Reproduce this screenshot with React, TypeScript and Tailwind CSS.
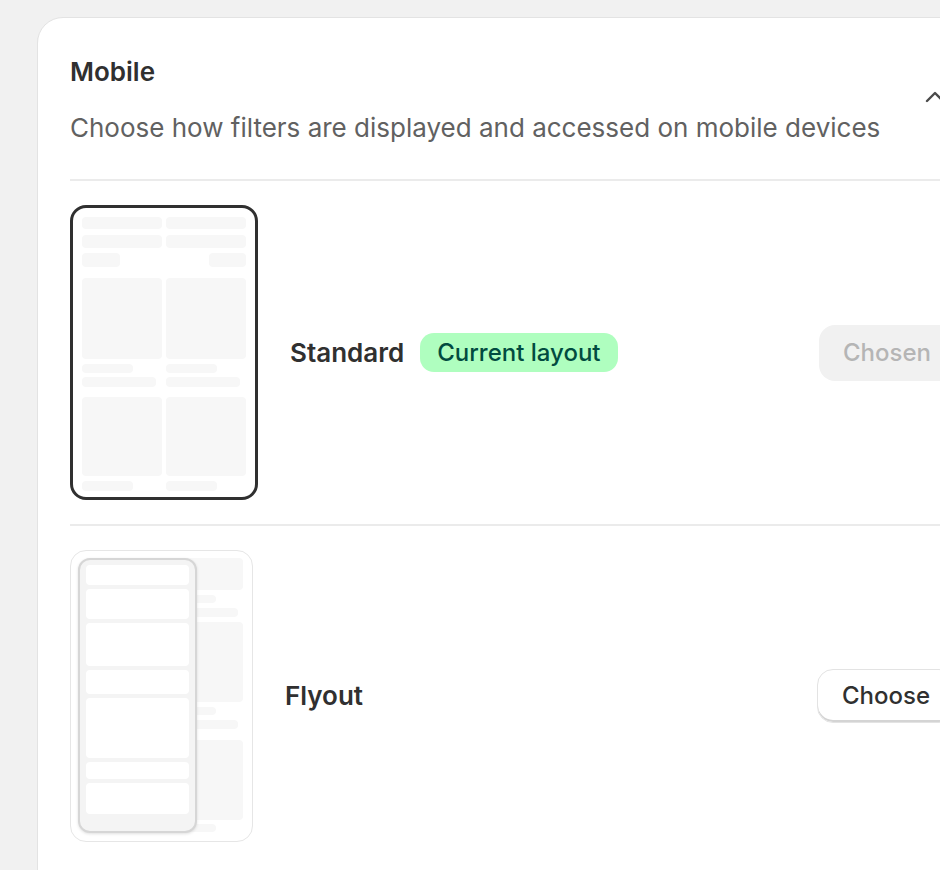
const Bar = ({ className }: { className: string }) => (
  <div className={`rounded-[4px] bg-[#f7f7f7] ${className}`} />
);

const StandardThumb = () => (
  <div className="h-[295px] w-[188px] shrink-0 overflow-hidden rounded-[16px] border-[3px] border-[#303030] bg-white p-[9px]">
    <div className="grid grid-cols-2 gap-x-1 gap-y-[6px]">
      <Bar className="h-3" />
      <Bar className="h-3" />
      <Bar className="h-[13px]" />
      <Bar className="h-[13px]" />
    </div>
    <div className="mt-[5px] flex justify-between">
      <Bar className="h-[14px] w-[38px]" />
      <Bar className="h-[14px] w-[37px]" />
    </div>
    <div className="mt-[11px] grid grid-cols-2 gap-x-1">
      {[0, 1].map((i) => (
        <div key={i} className="flex flex-col">
          <Bar className="h-[81px]" />
          <Bar className="mt-[5px] h-[9px] w-[51px]" />
          <Bar className="mt-[4px] h-[10px] w-[74px]" />
          <Bar className="mt-[10px] h-[79px]" />
          <Bar className="mt-[5px] h-[10px] w-[51px]" />
        </div>
      ))}
    </div>
  </div>
);

const flyoutCells = ["h-[20px]", "h-[30px]", "h-[43px]", "h-[24px]", "h-[60px]", "h-[17px]", "h-[31px]"];

const FlyoutThumb = () => (
  <div className="relative h-[292px] w-[183px] shrink-0 overflow-hidden rounded-[16px] border border-[#e6e6e6] bg-white pl-[14px] pr-[9px] pt-[7px]">
    {/* page behind the flyout */}
    <div className="grid grid-cols-2 gap-x-1">
      {[0, 1].map((i) => (
        <div key={i} className="flex flex-col">
          <Bar className="h-[32px]" />
          <Bar className="mt-[5px] h-[8px] w-[50px]" />
          <Bar className="mt-[5px] h-[9px] w-[72px]" />
          <Bar className="mt-[5px] h-[80px]" />
          <Bar className="mt-[5px] h-[8px] w-[50px]" />
          <Bar className="mt-[5px] h-[9px] w-[72px]" />
          <Bar className="mt-[11px] h-[80px]" />
          <Bar className="mt-[4px] h-[8px] w-[50px]" />
        </div>
      ))}
    </div>

    {/* flyout panel */}
    <div className="absolute left-[7px] top-[7px] flex h-[275px] w-[119px] flex-col gap-1 rounded-[12px] border-2 border-[#d6d6d6] bg-[#f4f4f4] px-[6px] pt-[5px] shadow-[0_1px_3px_rgba(0,0,0,0.12)]">
      {flyoutCells.map((h, i) => (
        <div key={i} className={`rounded-[4px] bg-white ${h}`} />
      ))}
    </div>
  </div>
);

export default function App() {
  return (
    <div className="h-[870px] overflow-hidden bg-[#f1f1f1] pl-[37px] pt-[17px] font-['Inter',sans-serif] text-[#303030]">
      <div className="w-[951px] rounded-[26px] border border-[#e3e3e3] bg-white px-8 pb-12 pt-[38px] shadow-[0_1px_0_rgba(0,0,0,0.05)]">
        {/* Header */}
        <div className="flex items-center justify-between">
          <div className="flex flex-col gap-6">
            <h3 className="text-[26px] font-semibold leading-8">Mobile</h3>
            <p className="text-[26px] leading-8 text-[#616161]">
              Choose how filters are displayed and accessed on mobile devices
            </p>
          </div>
          <svg
            width="20"
            height="12"
            viewBox="0 0 20 12"
            fill="none"
            stroke="#4a4a4a"
            strokeWidth="2.4"
            strokeLinecap="round"
            strokeLinejoin="round"
            className="-mt-[6px] mr-[10px]"
          >
            <polyline points="2,10 10,2 18,10" />
          </svg>
        </div>

        <div className="mt-[35px] h-[2px] bg-[#ebebeb]" />

        {/* Standard */}
        <div className="flex items-center py-6">
          <StandardThumb />
          <div className="ml-8 flex items-center gap-4">
            <span className="text-[26px] font-semibold leading-8">Standard</span>
            <span className="rounded-[14px] bg-[#affebf] px-[17px] py-[3.5px] text-[24px] font-medium leading-8 text-[#014b40]">
              Current layout
            </span>
          </div>
          <button className="ml-auto rounded-[16px] bg-[#f1f1f1] px-6 py-3 text-[24px] font-medium leading-8 text-[#b5b5b5]">
            Chosen
          </button>
        </div>

        <div className="h-[2px] bg-[#ebebeb]" />

        {/* Flyout */}
        <div className="flex items-center py-6">
          <FlyoutThumb />
          <span className="ml-8 text-[26px] font-semibold leading-8">Flyout</span>
          <button className="ml-auto rounded-[16px] border border-[#e3e3e3] bg-white px-6 py-[10px] text-[24px] font-medium leading-8 text-[#303030] shadow-[inset_0_-2px_0_#d4d4d4]">
            Choose
          </button>
        </div>
      </div>
    </div>
  );
}
